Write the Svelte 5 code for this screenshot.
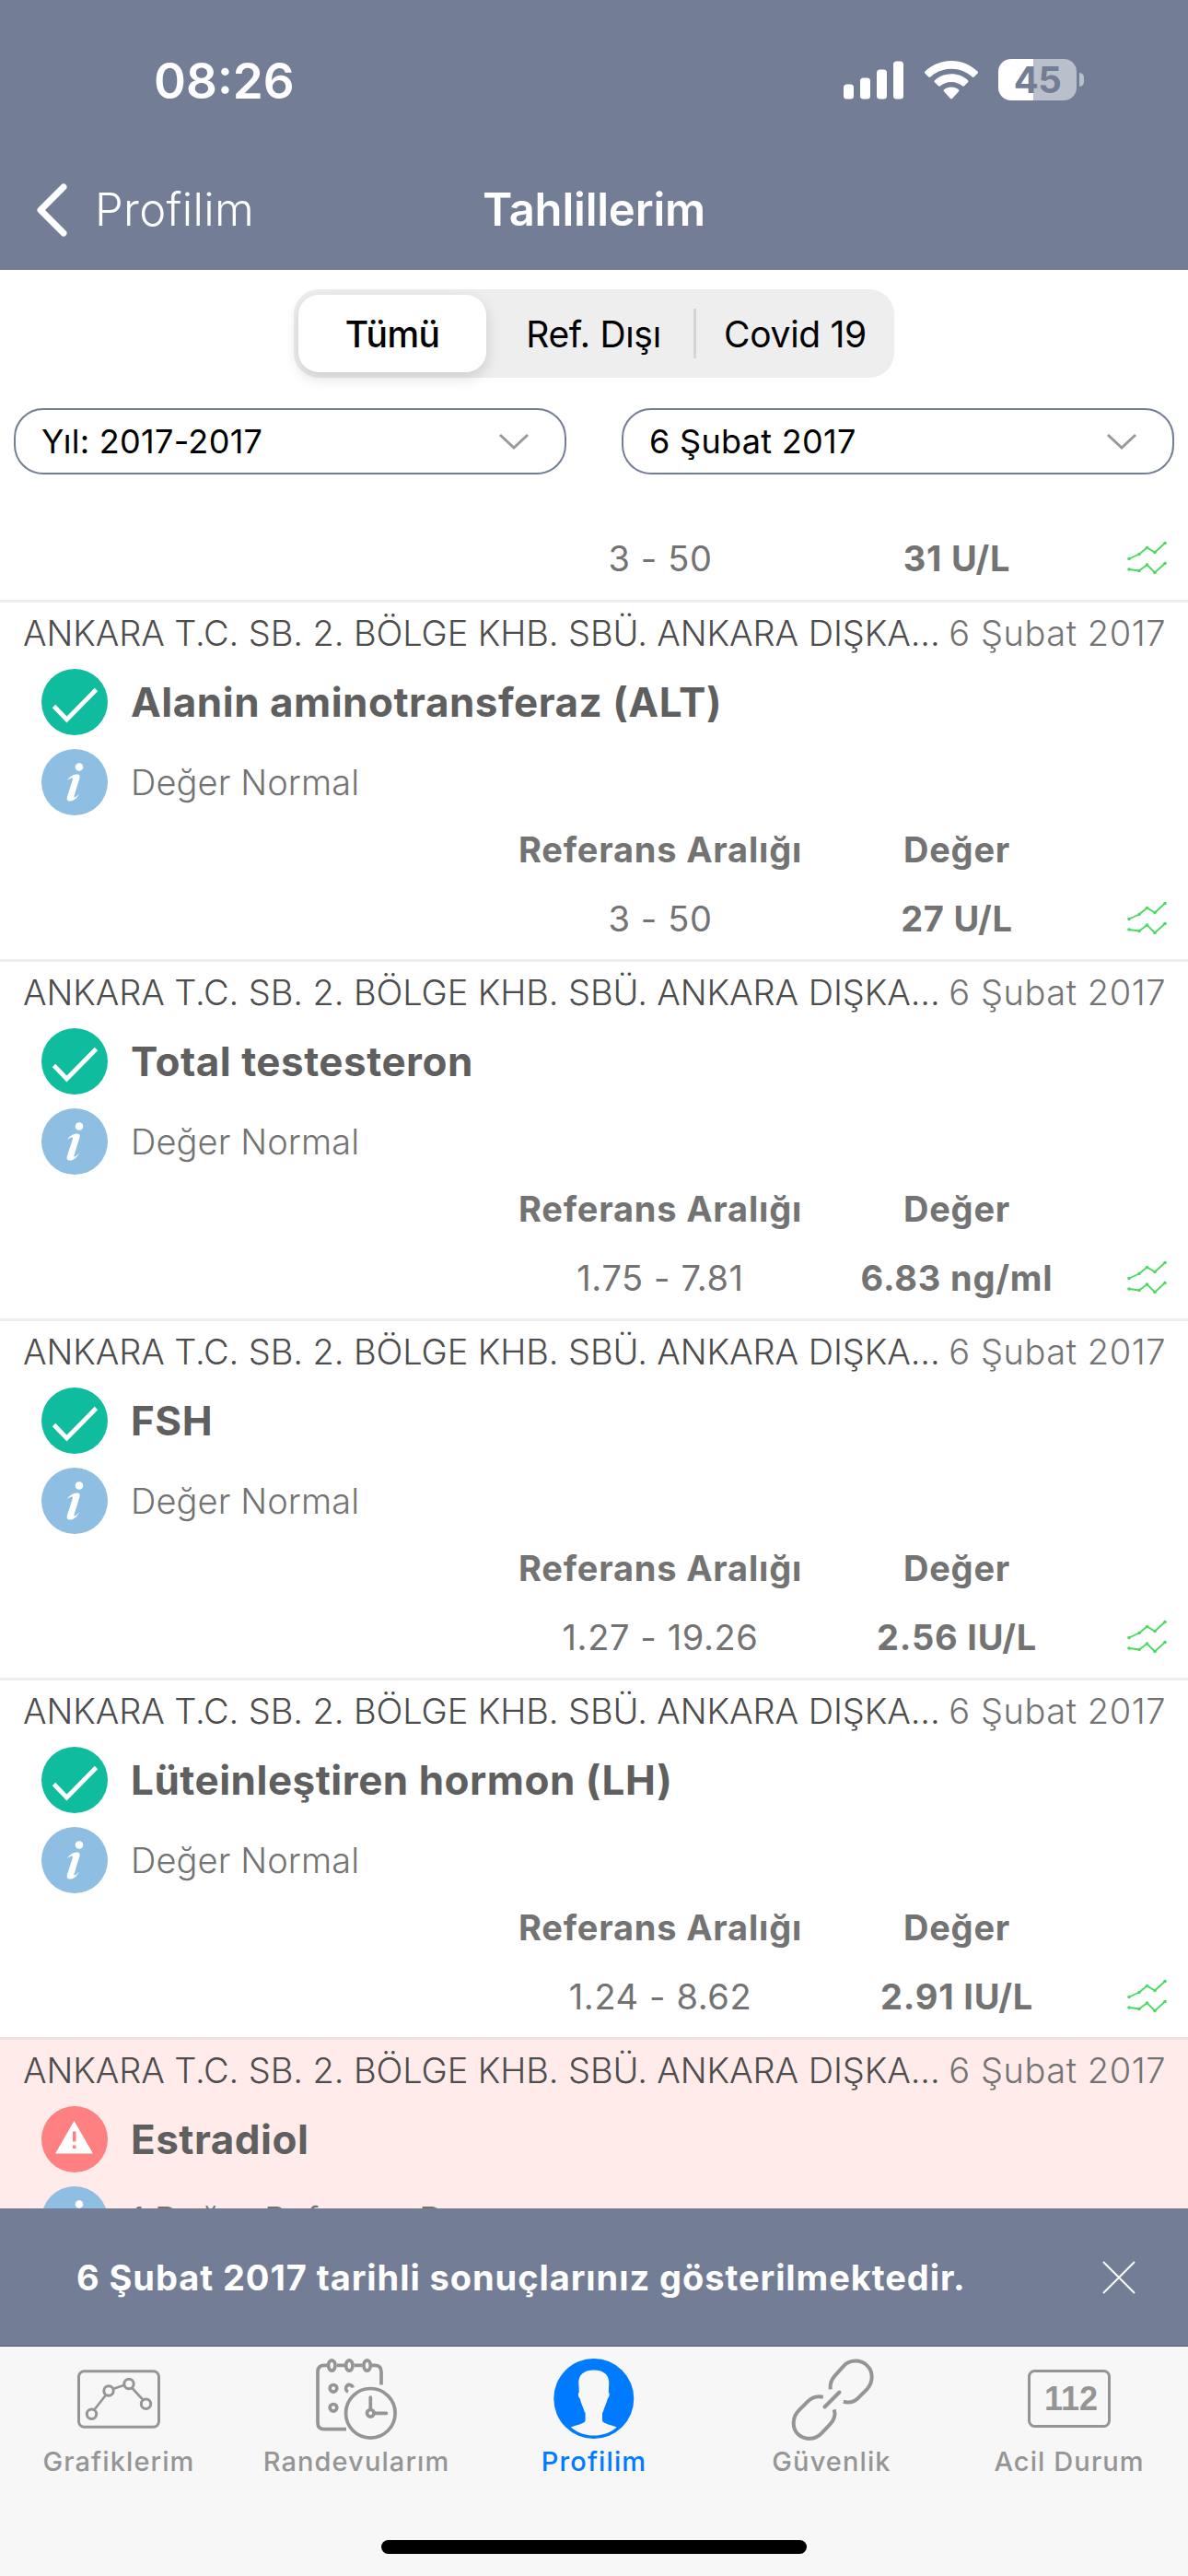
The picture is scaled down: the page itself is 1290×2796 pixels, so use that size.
<script lang="ts">
  type Result = {
    name: string;
    range?: string;
    value?: string;
    alert?: boolean;
    note?: string;
  };

  const hospital = "ANKARA T.C. SB. 2. BÖLGE KHB. SBÜ. ANKARA DIŞKA...";
  const date = "6 Şubat 2017";

  const results: Result[] = [
    { name: "Alanin aminotransferaz (ALT)", range: "3 - 50", value: "27 U/L" },
    { name: "Total testesteron", range: "1.75 - 7.81", value: "6.83 ng/ml" },
    { name: "FSH", range: "1.27 - 19.26", value: "2.56 IU/L" },
    { name: "Lüteinleştiren hormon (LH)", range: "1.24 - 8.62", value: "2.91 IU/L" },
    { name: "Estradiol", alert: true, note: "1 Değer Referans Dışı" }
  ];

  const segments = ["Tümü", "Ref. Dışı", "Covid 19"];
  const filters = ["Yıl: 2017-2017", date];
  const tabs = ["Grafiklerim", "Randevularım", "Profilim", "Güvenlik", "Acil Durum"];

  const upper = [[4, 20.5], [15, 15.5], [23.5, 8.5], [32, 13.5], [43, 3.5]];
  const lower = [[4, 32], [15, 33.5], [23.5, 27], [32, 35.5], [43, 25.5]];

  let segment = $state("Tümü");
  let tab = $state("Profilim");
</script>

{#snippet values(range: string, value: string)}
  <div class="cells">
    <span>{range}</span>
    <b>{value}</b>
    <svg class="trend" viewBox="0 0 46 42" width="46" height="42">
      {#each [upper, lower] as points}
        <polyline points={points.join(" ")} fill="none" stroke="#4cd964" stroke-width="1.9" />
        {#each points as [x, y]}
          <circle cx={x} cy={y} r="1.8" fill="#4cd964" />
        {/each}
      {/each}
    </svg>
  </div>
{/snippet}

<div class="screen">
  <header>
    <div class="status">
      <span class="time">08:26</span>
      <div class="indicators">
        <svg viewBox="0 0 66 42" width="66" height="42" fill="#fff">
          <rect x="0" y="25.5" width="11" height="16" rx="3.5" />
          <rect x="18" y="18.5" width="11" height="23" rx="3.5" />
          <rect x="36" y="9.5" width="11" height="32" rx="3.5" />
          <rect x="54" y="0.5" width="11" height="41" rx="3.5" />
        </svg>
        <svg class="wifi" viewBox="0 0 58 42" width="58" height="42" fill="#fff">
          <path d="M29 0C40 0 50 4.400 57.500 11.500C58.200 12.200 58.200 13 57.600 13.600L53.700 17.500C53.100 18.100 52.300 18.100 51.700 17.500C45.500 11.800 37.500 8.700 29 8.700S12.500 11.800 6.300 17.500C5.700 18.100 4.900 18.100 4.300 17.500L.4 13.600C-.2 13-.2 12.200.5 11.500C8 4.400 18 0 29 0Z" />
          <path d="M29 14.300C36 14.300 42.300 16.900 47 21.200C47.700 21.900 47.700 22.600 47.100 23.200L43 27.300C42.400 27.900 41.700 27.900 41 27.300C37.700 24.500 33.600 22.900 29 22.900S20.300 24.500 17 27.300C16.300 27.900 15.600 27.900 15 27.300L10.900 23.200C10.300 22.600 10.300 21.900 11 21.200C15.700 16.900 22 14.300 29 14.300Z" />
          <path d="M29 28.500C32 28.500 34.700 29.500 36.900 31.200C37.700 31.900 37.700 32.600 37 33.300L30 40.900C29.300 41.500 28.700 41.500 28 40.900L21 33.300C20.300 32.600 20.300 31.900 21.100 31.200C23.300 29.500 26 28.500 29 28.500Z" />
        </svg>
        <div class="battery">45</div>
      </div>
    </div>
    <nav>
      <button class="back">
        <svg viewBox="0 0 36 58" width="36" height="58" fill="none" stroke="#fff" stroke-width="7" stroke-linecap="round" stroke-linejoin="round">
          <path d="M31 4L6 29L31 54" />
        </svg>
        Profilim
      </button>
      <h1>Tahlillerim</h1>
    </nav>
  </header>

  <div class="segments">
    {#each segments as label}
      <button class={[segment === label && "selected"]} onclick={() => (segment = label)}>{label}</button>
    {/each}
  </div>

  <div class="filters">
    {#each filters as label}
      <button>
        {label}
        <svg viewBox="0 0 32 18" width="32" height="18" fill="none" stroke="#999" stroke-width="3">
          <path d="M1 2L16 16L31 2" />
        </svg>
      </button>
    {/each}
  </div>

  <main>
    <article class="first">
      {@render values("3 - 50", "31 U/L")}
    </article>
    {#each results as result}
      <article class={[result.alert && "alert"]}>
        <div class="source">
          <span class="hospital">{hospital}</span>
          <time>{date}</time>
        </div>
        <div class="line">
          {#if result.alert}
            <svg viewBox="0 0 72 72" width="72" height="72">
              <circle cx="36" cy="36" r="36" fill="#ff8080" />
              <path d="M35.500 16L56 51.500H15Z" fill="#fff" />
              <path d="M34 27.500h3.500v11H34zM34 42.500h3.500v3.500H34z" fill="#ff8080" />
            </svg>
          {:else}
            <svg viewBox="0 0 72 72" width="72" height="72">
              <circle cx="36" cy="36" r="36" fill="#0fbc9e" />
              <path d="M13.500 40.500L27.500 55L59.500 22.500" fill="none" stroke="#fff" stroke-width="4.800" />
            </svg>
          {/if}
          <h2>{result.name}</h2>
        </div>
        <div class="line info">
          <svg viewBox="0 0 72 72" width="72" height="72">
            <circle cx="36" cy="36" r="36" fill="#8ebfe2" />
            <circle cx="41" cy="19.500" r="4.300" fill="#fff" />
            <path d="M28 34C31 29 35.500 27.500 39 27.500C41.500 27.500 42 29 41.500 31.500L35.500 51C35 53.500 37 53 41 48.500C38.500 54 34.500 56.500 31 56.500C28 56.500 27 54.500 28 51.500L34 33C34.500 30.500 31.500 31 28 34Z" fill="#fff" />
          </svg>
          <p>{result.note ?? "Değer Normal"}</p>
        </div>
        {#if result.range && result.value}
          <div class="cells">
            <b>Referans Aralığı</b>
            <b>Değer</b>
          </div>
          {@render values(result.range, result.value)}
        {/if}
      </article>
    {/each}
  </main>

  <div class="toast">
    <span>6 Şubat 2017 tarihli sonuçlarınız gösterilmektedir.</span>
    <svg viewBox="0 0 36 36" width="36" height="36" stroke="#fff" stroke-width="2">
      <path d="M1 1L35 35M35 1L1 35" />
    </svg>
  </div>

  <footer>
    <div class="tabs">
      {#each tabs as label, i}
        <button class={[tab === label && "active"]} onclick={() => (tab = label)}>
          <svg viewBox="0 0 90 90" width="90" height="90" fill="none" stroke="currentColor" stroke-width="3">
            {#if i === 0}
              <rect x="1.500" y="13.800" width="87" height="60.500" rx="6" />
              <path d="M18 56L31 39.500M38.500 33L50.500 29M59 31.500L71.500 45" stroke-width="2.600" />
              <circle cx="15.500" cy="60.300" r="5.200" />
              <circle cx="34" cy="35" r="5.200" />
              <circle cx="56" cy="27.500" r="5.200" />
              <circle cx="74.500" cy="49.300" r="5.200" />
            {:else if i === 1}
              <g stroke-width="3.700">
                <path d="M13 7.300H10Q3 7.300 3 14.300V69.700Q3 76.700 10 76.700H34M24 7.300H32M43 7.300H51M62 7.300H65Q72 7.300 72 14.300V28.500" />
                <ellipse cx="18.300" cy="7.500" rx="3.700" ry="5.700" />
                <ellipse cx="37.300" cy="7.500" rx="3.700" ry="5.700" />
                <ellipse cx="56.600" cy="7.500" rx="3.700" ry="5.700" />
                <circle cx="20" cy="32.300" r="3.800" />
                <path d="M36 36A3.900 3.900 0 1 1 41.200 31.500" />
                <circle cx="20" cy="53.300" r="3.800" />
                <circle cx="60.300" cy="59.300" r="26.800" />
                <circle cx="60.300" cy="59.300" r="3.800" />
                <path d="M60.300 55V42M65 59.300H77.500" stroke-linecap="round" />
              </g>
            {:else if i === 2}
              <circle cx="44.800" cy="43.500" r="43.500" fill="currentColor" stroke="none" />
              <path d="M44.800 12.500C55 12.500 61 17 61.300 26L60.800 36.500C62.500 38 61.500 42 59.800 43.500C58.500 49 56 53 55 57.500L54 59V67C54 70 60 71 69.800 74.500C62 81 54 83.500 44.800 83.500S28 81 19.800 74.500C30 71 35.600 70 35.600 67V59L34.600 57.500C33.500 53 31 49 29.800 43.500C28 42 27 38 28.800 36.500L28.300 26C28.500 17 34.500 12.500 44.800 12.500Z" fill="#f7f7f7" stroke="none" />
            {:else if i === 3}
              <path transform="translate(1.800 .8)" d="M42 32.500C41 27 43 22 47 17.500L56 7.500C63 0 75 0 82 7C89 14 88 25 82 32L72 42C68 46 62 47.500 56 46M34 41C27 39.500 21 42 17 46L8 55C0 63 0 75 7 81.500C14 88 25 87.500 32 80.500L41 71C46 66 48 61 46 54.500" stroke-width="4" />
              <path d="M37.500 52.500L53.500 36.500" stroke-width="4" stroke-linecap="round" />
            {:else}
              <rect x="1.500" y="13.500" width="87" height="60" rx="6" />
              <text x="47" y="56">112</text>
            {/if}
          </svg>
          {label}
        </button>
      {/each}
    </div>
    <div class="home"></div>
  </footer>
</div>

<style>
  :global(body) {
    margin: 0;
  }

  .screen {
    display: flex;
    flex-direction: column;
    width: 1290px;
    height: 2796px;
    overflow: hidden;
    background: #fff;
    font-family: Inter, "Liberation Sans", sans-serif;
    color: #737373;
  }

  button {
    padding: 0;
    border: 0;
    background: none;
    font: inherit;
    letter-spacing: inherit;
    color: inherit;
  }

  h1,
  h2,
  p {
    margin: 0;
  }

  svg {
    display: block;
    flex: none;
    overflow: visible;
  }

  header {
    flex: none;
    height: 293px;
    background: #737d96;
    color: #fff;
  }

  .status {
    display: flex;
    justify-content: space-between;
    align-items: center;
    height: 173px;
    padding: 0 113px 0 167px;
    box-sizing: border-box;
  }

  .time {
    margin-top: 3px;
    font-size: 53px;
    font-weight: 600;
  }

  .indicators {
    display: flex;
    align-items: center;
  }

  .wifi {
    margin: 0 22px;
  }

  .battery {
    position: relative;
    width: 85px;
    height: 45px;
    margin-right: 8px;
    border-radius: 14px;
    background: linear-gradient(90deg, #fff 38px, #b9bfcb 38px);
    color: #737d96;
    font-size: 40px;
    font-weight: 700;
    line-height: 46px;
    letter-spacing: -0.5px;
    text-align: center;
  }

  .battery::after {
    content: "";
    position: absolute;
    left: 88px;
    top: 15px;
    width: 5px;
    height: 15px;
    border-radius: 0 5px 5px 0;
    background: #b9bfcb;
  }

  nav {
    display: grid;
    grid-template-columns: 1fr auto 1fr;
    align-items: center;
    height: 109px;
    padding: 0 38px;
  }

  .back {
    display: flex;
    align-items: center;
    gap: 29px;
    font-size: 49px;
    font-weight: 300;
    letter-spacing: 0.3px;
  }

  h1 {
    font-size: 49px;
    font-weight: 600;
    letter-spacing: -0.2px;
  }

  .segments {
    flex: none;
    display: grid;
    grid-template-columns: 204px 225px 213px;
    align-self: center;
    width: 652px;
    height: 96px;
    margin-top: 21px;
    padding: 6px 5px;
    box-sizing: border-box;
    border-radius: 27px;
    background: #eee;
    color: #000;
    font-size: 39px;
    font-weight: 430;
    letter-spacing: -0.3px;
  }

  .segments button {
    padding-left: 8px;
    border-radius: 22px;
  }

  .segments button:last-child {
    background: linear-gradient(#d5d5d6, #d5d5d6) 0 15px / 3px 54px no-repeat;
    border-radius: 0;
  }

  .segments .selected {
    padding: 0;
    background: #fff;
    box-shadow: 0 6px 16px rgba(0, 0, 0, 0.14);
    font-weight: 500;
    letter-spacing: -0.6px;
  }

  .filters {
    flex: none;
    display: grid;
    grid-template-columns: 1fr 1fr;
    gap: 60px;
    margin-top: 33px;
    padding: 0 15px;
    color: #000;
    font-size: 36px;
    letter-spacing: 0.3px;
  }

  .filters button {
    display: flex;
    justify-content: space-between;
    align-items: center;
    height: 72px;
    padding: 0 39px 0 28px;
    border: 2px solid #737d96;
    border-radius: 32px;
  }

  main {
    flex: 1;
    min-height: 0;
    overflow: hidden;
  }

  article {
    height: 387px;
    border-top: 3px solid #eee;
    font-size: 38px;
  }

  .first {
    height: 82px;
    padding-top: 54px;
    border: 0;
  }

  .alert {
    border-color: #f0dfdf;
    background: #ffebe9;
  }

  .source {
    display: flex;
    justify-content: space-between;
    height: 68px;
    padding: 0 24px 0 25px;
    line-height: 66px;
    font-weight: 300;
    white-space: nowrap;
  }

  .hospital {
    color: #4d4d4d;
    letter-spacing: -0.1px;
  }

  time {
    letter-spacing: 0.55px;
  }

  .line {
    display: flex;
    align-items: center;
    gap: 25px;
    height: 72px;
    padding-left: 45px;
    margin-top: 4px;
  }

  .info {
    margin-top: 15px;
    font-weight: 300;
    letter-spacing: 0.1px;
  }

  h2 {
    font-size: 44px;
    font-weight: 700;
    letter-spacing: 0.5px;
    color: #5f5f5f;
  }

  .cells {
    display: grid;
    grid-template-columns: 322px 322px 1fr;
    align-items: center;
    justify-items: center;
    height: 75px;
    padding-left: 556px;
    line-height: 73px;
    letter-spacing: 0.6px;
  }

  .cells b {
    letter-spacing: 0.8px;
  }

  .trend {
    justify-self: end;
    margin-right: 22px;
  }

  .toast {
    flex: none;
    display: flex;
    justify-content: space-between;
    align-items: center;
    height: 149px;
    padding: 0 57px 0 83px;
    border-bottom: 1px solid #4e5972;
    background: #737d96;
    color: #fff;
    font-size: 38px;
    font-weight: 700;
    letter-spacing: 0.93px;
  }

  footer {
    flex: none;
    height: 249px;
    background: #f7f7f7;
  }

  .tabs {
    display: grid;
    grid-template-columns: repeat(5, 1fr);
    height: 210px;
    color: #959595;
    font-size: 29px;
    font-weight: 500;
    letter-spacing: 1.1px;
  }

  .tabs button {
    display: flex;
    flex-direction: column;
    align-items: center;
    gap: 2px;
    padding-top: 13px;
    line-height: 40px;
  }

  .tabs .active {
    color: #007aff;
  }

  .tabs text {
    fill: currentColor;
    stroke: none;
    font-family: "Liberation Sans", sans-serif;
    font-size: 36px;
    font-weight: 700;
    letter-spacing: 0;
    text-anchor: middle;
  }

  .home {
    width: 462px;
    height: 15px;
    margin: 0 auto;
    border-radius: 8px;
    background: #000;
  }
</style>
